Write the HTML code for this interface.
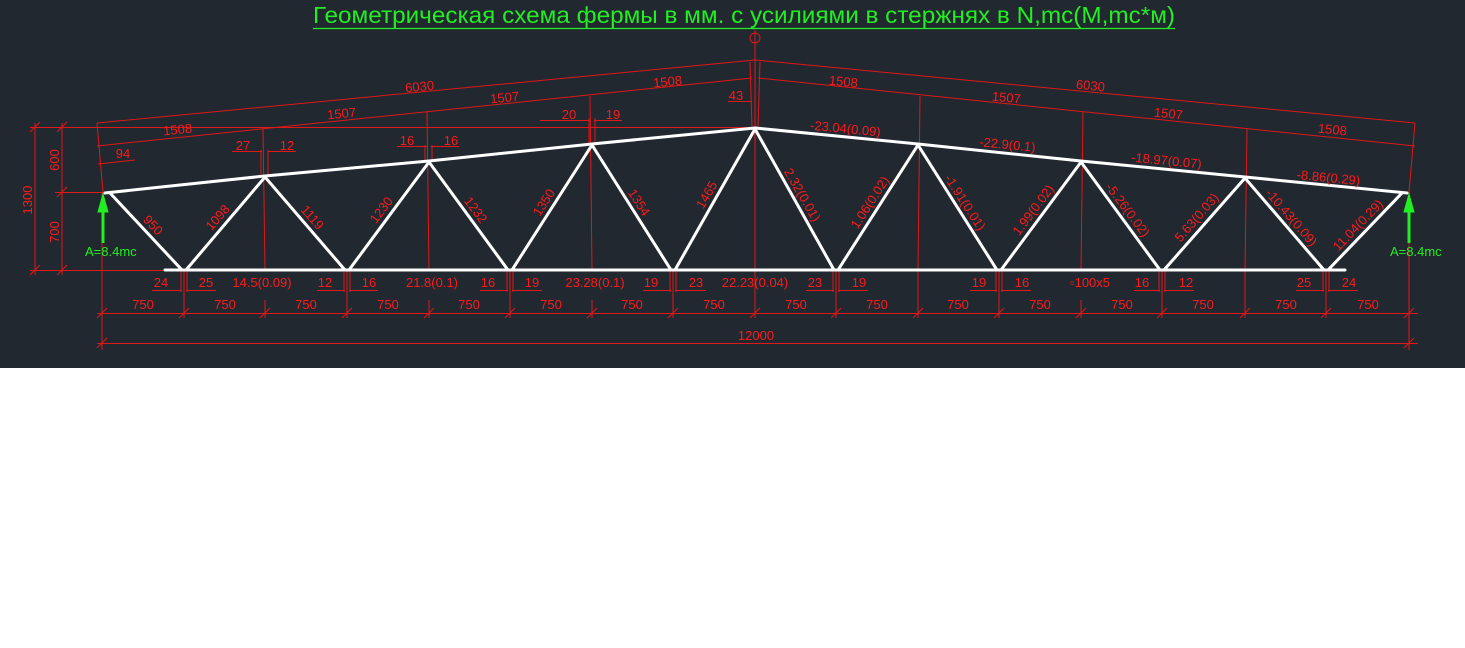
<!DOCTYPE html>
<html><head><meta charset="utf-8"><style>
html,body{margin:0;padding:0;background:#fff;}
svg{display:block;}
text{font-family:"Liberation Sans","DejaVu Sans",sans-serif;}
.r{fill:#ff1a1a;font-size:13px;}
</style></head><body>
<svg width="1465" height="648" viewBox="0 0 1465 648" xmlns="http://www.w3.org/2000/svg">
<rect x="0" y="0" width="1465" height="368" fill="#212830"/>
<text x="313" y="23" fill="#22ee22" font-size="23" textLength="862" lengthAdjust="spacingAndGlyphs">Геометрическая схема фермы в мм. с усилиями в стержнях в N,mc(M,mc*м)</text>
<line x1="313" y1="28.5" x2="1175" y2="28.5" stroke="#22ee22" stroke-width="1.3"/>

<g stroke="#e01818" stroke-width="1" fill="none">
<!-- center line -->
<line x1="755" y1="30" x2="755" y2="300"/>
<circle cx="755" cy="38" r="5"/>
<!-- top dims -->
<line x1="97" y1="123" x2="755" y2="60"/><line x1="755" y1="60" x2="1415" y2="123"/>
<line x1="97" y1="146" x2="752" y2="78"/><line x1="758" y1="78" x2="1415" y2="146"/>
<line x1="97" y1="123" x2="103" y2="192"/><line x1="1415" y1="123" x2="1409" y2="192"/>
<line x1="98" y1="164" x2="135" y2="160"/>
<line x1="750" y1="62" x2="752" y2="128"/><line x1="760" y1="62" x2="758" y2="128"/>
<!-- verticals from top nodes -->
<line x1="263" y1="129" x2="265" y2="270"/><line x1="427" y1="112" x2="429" y2="270"/>
<line x1="590" y1="96" x2="592" y2="270"/><line x1="920" y1="96" x2="918" y2="270"/>
<line x1="1083" y1="112" x2="1081" y2="270"/><line x1="1247" y1="129" x2="1245" y2="270"/>
<!-- left height dims -->
<line x1="35" y1="123" x2="35" y2="275"/><line x1="62" y1="123" x2="62" y2="275"/>
<line x1="30" y1="127.5" x2="755" y2="127.5"/>
<line x1="55" y1="192.5" x2="103" y2="192.5"/>
<line x1="30" y1="270.5" x2="165" y2="270.5"/>
<!-- bottom dims -->
<line x1="102" y1="192" x2="102" y2="350"/><line x1="1409" y1="192" x2="1409" y2="350"/>
<line x1="97" y1="313.5" x2="1418" y2="313.5"/>
<line x1="97" y1="343.5" x2="1418" y2="343.5"/>
<path d="M184 270V318M347 270V318M510 270V318M673 270V318M836 270V318M999 270V318M1162 270V318M1326 270V318M265 300V318M429 300V318M592 300V318M755 300V318M918 270V318M1081 300V318M1245 270V318"/>
<path d="M97 318l10 -10M179 318l10 -10M260 318l10 -10M342 318l10 -10M424 318l10 -10M505 318l10 -10M587 318l10 -10M668 318l10 -10M750 318l10 -10M831 318l10 -10M913 318l10 -10M994 318l10 -10M1076 318l10 -10M1157 318l10 -10M1240 318l10 -10M1321 318l10 -10M1404 318l10 -10M97 348l10 -10M1404 348l10 -10M30 132l10 -10M57 132l10 -10M57 197l10 -10M30 275l10 -10M57 275l10 -10"/>
<!-- underlines -->
<path d="M152 290.5H182M186 290.5H216M317 290.5H345M349 290.5H378M480 290.5H508M512 290.5H542M643 290.5H671M675 290.5H706M806 290.5H834M838 290.5H868M970 290.5H997M1001 290.5H1031M1134 290.5H1160M1164 290.5H1194M1296 290.5H1324M1328 290.5H1358"/>
<path d="M232 151.5H262M268 151.5H296M397 146.5H427M431 146.5H459M540 120.5H590M594 120.5H622M728 101.5H752"/>
<path d="M181 270V292M187 270V292M344 270V292M350 270V292M507 270V292M513 270V292M670 270V292M676 270V292M833 270V292M839 270V292M996 270V292M1002 270V292M1159 270V292M1165 270V292M1323 270V292M1329 270V292"/>
<path d="M261 150V176M268 150V176M425 145V160M432 145V160M589 118V144M595 118V144"/>
</g>

<!-- truss -->
<g stroke="#fff" stroke-width="3" fill="none" stroke-linecap="round">
<polyline points="105,193 265,176 429,161 592,144 755,128 918,144 1081,161 1245,177 1407,193"/>
<line x1="165" y1="270" x2="1345" y2="270"/>
<polyline points="110,193 182,270 186,270 265,177 345,270 349,270 429,162 508,270 512,270 592,145 671,270 675,270 755,129 834,270 838,270 918,145 997,270 1001,270 1081,162 1160,270 1164,270 1245,178 1324,270 1328,270 1402,193"/>
</g>

<!-- supports -->
<g fill="#22ee22" stroke="#22ee22" stroke-width="3">
<line x1="103" y1="243" x2="103" y2="205"/><path d="M98 212L103 194L108 212Z" stroke-width="1"/>
<line x1="1409" y1="243" x2="1409" y2="205"/><path d="M1404 212L1409 194L1414 212Z" stroke-width="1"/>
</g>
<text x="85" y="256" fill="#22ee22" font-size="13">A=8.4mc</text>
<text x="1390" y="256" fill="#22ee22" font-size="13">A=8.4mc</text>

<g class="r" text-anchor="middle">
<text x="420" y="91" transform="rotate(-5.5 420 91)">6030</text>
<text x="1090" y="90" transform="rotate(5.5 1090 90)">6030</text>
<text x="178" y="134" transform="rotate(-5.5 178 134)">1508</text>
<text x="342" y="118" transform="rotate(-5.5 342 118)">1507</text>
<text x="505" y="102" transform="rotate(-5.5 505 102)">1507</text>
<text x="668" y="86" transform="rotate(-5.5 668 86)">1508</text>
<text x="843" y="86" transform="rotate(5.5 843 86)">1508</text>
<text x="1006" y="102" transform="rotate(5.5 1006 102)">1507</text>
<text x="1168" y="118" transform="rotate(5.5 1168 118)">1507</text>
<text x="1332" y="134" transform="rotate(5.5 1332 134)">1508</text>
<text x="123" y="158">94</text>
<text x="243" y="150">27</text><text x="287" y="150">12</text>
<text x="407" y="145">16</text><text x="451" y="145">16</text>
<text x="569" y="119">20</text><text x="613" y="119">19</text>
<text x="736" y="100">43</text>
<text x="32" y="200" transform="rotate(-90 32 200)">1300</text>
<text x="59" y="160" transform="rotate(-90 59 160)">600</text>
<text x="59" y="232" transform="rotate(-90 59 232)">700</text>
<!-- diagonal labels -->
<text transform="translate(147,231) rotate(46)" y="-4">950</text>
<text transform="translate(224,223) rotate(-49)" y="-4">1098</text>
<text transform="translate(306,223) rotate(49)" y="-4">1119</text>
<text transform="translate(388,215) rotate(-53)" y="-4">1230</text>
<text transform="translate(469,215) rotate(53)" y="-4">1232</text>
<text transform="translate(551,207) rotate(-57)" y="-4">1350</text>
<text transform="translate(632,207) rotate(57)" y="-4">1354</text>
<text transform="translate(714,199) rotate(-60)" y="-4">1465</text>
<text transform="translate(795,199) rotate(60)" y="-4">2.32(0.01)</text>
<text transform="translate(877,207) rotate(-57)" y="-4">1.06(0.02)</text>
<text transform="translate(958,207) rotate(57)" y="-4">-1.91(0.01)</text>
<text transform="translate(1040,215) rotate(-53)" y="-4">1.99(0.02)</text>
<text transform="translate(1121,215) rotate(53)" y="-4">-5.26(0.02)</text>
<text transform="translate(1203,223) rotate(-49)" y="-4">5.63(0.03)</text>
<text transform="translate(1285,223) rotate(49)" y="-4">-10.43(0.09)</text>
<text transform="translate(1364,231) rotate(-46)" y="-4">11.04(0.29)</text>
<text transform="translate(845,133) rotate(5.6)">-23.04(0.09)</text>
<text transform="translate(1007,149) rotate(5.6)">-22.9(0.1)</text>
<text transform="translate(1166,165) rotate(5.6)">-18.97(0.07)</text>
<text transform="translate(1328,182) rotate(5.6)">-8.86(0.29)</text>
<!-- bottom -->
<text x="161" y="287">24</text><text x="206" y="287">25</text><text x="262" y="287">14.5(0.09)</text>
<text x="325" y="287">12</text><text x="369" y="287">16</text><text x="432" y="287">21.8(0.1)</text>
<text x="488" y="287">16</text><text x="532" y="287">19</text><text x="595" y="287">23.28(0.1)</text>
<text x="651" y="287">19</text><text x="696" y="287">23</text><text x="755" y="287">22.23(0.04)</text>
<text x="815" y="287">23</text><text x="859" y="287">19</text>
<text x="979" y="287">19</text><text x="1022" y="287">16</text><text x="1090" y="287">▫100x5</text>
<text x="1142" y="287">16</text><text x="1186" y="287">12</text>
<text x="1304" y="287">25</text><text x="1349" y="287">24</text>
<text x="143" y="309">750</text><text x="225" y="309">750</text><text x="306" y="309">750</text><text x="388" y="309">750</text>
<text x="469" y="309">750</text><text x="551" y="309">750</text><text x="632" y="309">750</text><text x="714" y="309">750</text>
<text x="796" y="309">750</text><text x="877" y="309">750</text><text x="958" y="309">750</text><text x="1040" y="309">750</text>
<text x="1122" y="309">750</text><text x="1203" y="309">750</text><text x="1286" y="309">750</text><text x="1368" y="309">750</text>
<text x="756" y="340">12000</text>
</g>
</svg>
</body></html>
